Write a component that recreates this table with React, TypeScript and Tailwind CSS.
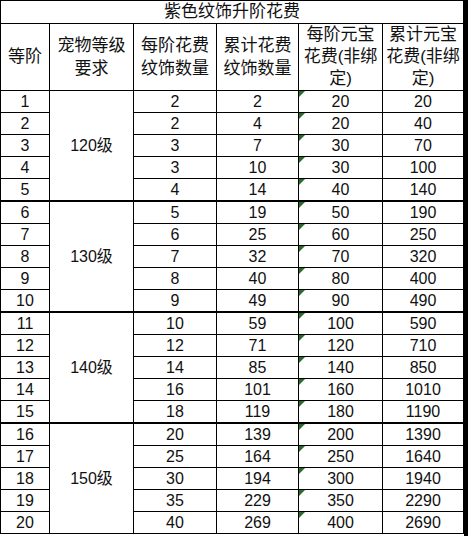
const groups = [
  {
    level: '120级',
    rows: [
      [1, 2, 2, 20, 20],
      [2, 2, 4, 20, 40],
      [3, 3, 7, 30, 70],
      [4, 3, 10, 30, 100],
      [5, 4, 14, 40, 140]
    ]
  },
  {
    level: '130级',
    rows: [
      [6, 5, 19, 50, 190],
      [7, 6, 25, 60, 250],
      [8, 7, 32, 70, 320],
      [9, 8, 40, 80, 400],
      [10, 9, 49, 90, 490]
    ]
  },
  {
    level: '140级',
    rows: [
      [11, 10, 59, 100, 590],
      [12, 12, 71, 120, 710],
      [13, 14, 85, 140, 850],
      [14, 16, 101, 160, 1010],
      [15, 18, 119, 180, 1190]
    ]
  },
  {
    level: '150级',
    rows: [
      [16, 20, 139, 200, 1390],
      [17, 25, 164, 250, 1640],
      [18, 30, 194, 300, 1940],
      [19, 35, 229, 350, 2290],
      [20, 40, 269, 400, 2690]
    ]
  }
]

const cell = 'flex items-center justify-center bg-white text-center'

function Flag() {
  return (
    <span className="absolute left-0 top-0 h-0 w-0 border-t-[6px] border-r-[6px] border-t-[#2c6a2c] border-r-transparent" />
  )
}

export default function App() {
  return (
    <div
      className="flex h-[536px] w-[468px] bg-white text-[#111]"
      style={{ fontFamily: '"Liberation Sans", "Noto Sans CJK SC", sans-serif' }}
    >
      <div className="grid h-[534px] w-[464px] grid-cols-[48px_83px_82px_81px_83px_80px] grid-rows-[22px_66px_repeat(5,21px)_22px_repeat(4,21px)_22px_repeat(4,21px)_22px_repeat(4,21px)] gap-px bg-black p-px">
        <div className={`${cell} col-span-6 text-[17px]`}>紫色纹饰升阶花费</div>

        <div className={`${cell} text-[17px]`}>等阶</div>
        <div className={`${cell} text-[17px] leading-[23px]`}>
          宠物等级
          <br />
          要求
        </div>
        <div className={`${cell} text-[17px] leading-[23px]`}>
          每阶花费
          <br />
          纹饰数量
        </div>
        <div className={`${cell} text-[17px] leading-[23px]`}>
          累计花费
          <br />
          纹饰数量
        </div>
        <div className={`${cell} text-[17px] leading-[22px]`}>
          每阶元宝
          <br />
          花费(非绑
          <br />
          定)
        </div>
        <div className={`${cell} text-[17px] leading-[22px]`}>
          累计元宝
          <br />
          花费(非绑
          <br />
          定)
        </div>

        {groups.map((group, gi) =>
          group.rows.map((row, ri) => {
            const edge = gi > 0 && ri === 0 ? 'border-t border-black' : ''
            return [
              <div key={`a${gi}-${ri}`} className={`${cell} ${edge} text-[16px]`}>
                {row[0]}
              </div>,
              ri === 0 ? (
                <div key={`l${gi}`} className={`${cell} ${edge} row-span-5 text-[16px]`}>
                  {group.level}
                </div>
              ) : null,
              <div key={`b${gi}-${ri}`} className={`${cell} ${edge} text-[16px]`}>
                {row[1]}
              </div>,
              <div key={`c${gi}-${ri}`} className={`${cell} ${edge} text-[16px]`}>
                {row[2]}
              </div>,
              <div key={`d${gi}-${ri}`} className={`${cell} ${edge} relative text-[16px]`}>
                <Flag />
                {row[3]}
              </div>,
              <div key={`e${gi}-${ri}`} className={`${cell} ${edge} text-[16px]`}>
                {row[4]}
              </div>
            ]
          })
        )}
      </div>
      <div className="h-full w-[4px] bg-black" />
    </div>
  )
}
